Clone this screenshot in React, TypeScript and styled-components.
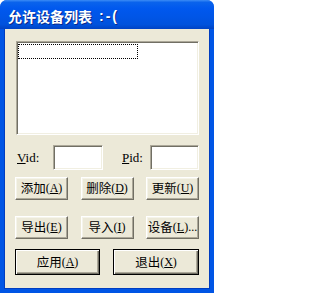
import { FunctionComponent, ReactNode } from 'react'
import styled, { createGlobalStyle } from 'styled-components'

const GlobalStyle = createGlobalStyle`
  html, body {
    margin: 0;
    padding: 0;
    background: #ffffff;
  }
  body {
    width: 214px;
    height: 293px;
    overflow: hidden;
  }
`

const Window = styled.div`
  display: flex;
  flex-direction: column;
  width: 214px;
  height: 293px;
  border-radius: 7px 7px 0 0;
  overflow: hidden;
  background: #0054e3;
`

const TitleBar = styled.div`
  display: flex;
  align-items: center;
  flex-shrink: 0;
  height: 29px;
  padding: 3px 0 0 8px;
  box-sizing: border-box;
  background: linear-gradient(
    #3c8cf5 0%,
    #0a63ec 8%,
    #0058ee 30%,
    #0055e6 60%,
    #0052dc 85%,
    #0043c4 100%
  );
  color: #ffffff;
  font: bold 14px 'Liberation Sans', 'Noto Sans CJK SC', sans-serif;
  text-shadow: 1px 1px 0 #0a2a8a;
  white-space: pre;
`

const Smiley = styled.span`
  margin-left: 7px;
  letter-spacing: 2px;
`

const Client = styled.div`
  flex: 1;
  display: flex;
  flex-direction: column;
  padding: 12px 11px 0 11px;
  border: 4px solid #0055e5;
  border-top: none;
  box-shadow: inset 1px 0 #003dc0, inset -1px 0 #003dc0, inset 0 -1px #003dc0;
  background: #ece9d8;
  font: 12px 'Liberation Serif', 'Noto Sans CJK SC', serif;
  color: #000000;
`

const sunken = `
  box-sizing: border-box;
  background: #ffffff;
  border: 1px solid;
  border-color: #aca899 #ffffff #ffffff #aca899;
  box-shadow: inset 1px 1px #716f64, inset -1px -1px #f1efe2;
`

const ListBox = styled.div`
  ${sunken}
  height: 94px;
  margin-left: 1px;
  padding: 2px 0 0 1px;
`

const FocusItem = styled.div`
  width: 120px;
  height: 15px;
  box-sizing: border-box;
  border: 1px dotted #000000;
`

const FieldRow = styled.div`
  display: grid;
  grid-template-columns: 38px 50px 17px 30px 49px;
  align-items: center;
  height: 25px;
  margin-top: 10px;
`

const Label = styled.span`
  padding-left: 2px;
  font-size: 13px;
`

const Input = styled.div`
  ${sunken}
  height: 25px;
`

const ButtonRow = styled.div<{ cols: string; top: number; h: number }>`
  display: grid;
  grid-template-columns: ${({ cols }) => cols};
  justify-content: space-between;
  height: ${({ h }) => h}px;
  margin-top: ${({ top }) => top}px;
`

const Button = styled.button<{ primary?: boolean }>`
  display: flex;
  align-items: center;
  justify-content: center;
  padding: 0;
  margin: 0;
  background: #ece9d8;
  font: inherit;
  color: #000000;
  white-space: nowrap;
  border: 1px solid;
  border-color: #ffffff #716f64 #716f64 #ffffff;
  box-shadow: inset -1px -1px #aca899, inset 1px 1px #f5f4ea;

  ${({ primary }) =>
    primary &&
    `
    border-color: #000000;
    box-shadow: inset 1px 1px #ffffff, inset -1px -1px #716f64, inset -2px -2px #aca899;
  `}

  u {
    text-decoration: underline;
    text-underline-offset: 1px;
  }
`

const Cjk = styled.span`
  font-family: 'Noto Sans CJK SC', sans-serif;
  font-size: 12.5px;
  line-height: 1;
`

interface BtnProps {
  label: string
  mnemonic: string
  suffix?: string
  primary?: boolean
}

const DlgButton: FunctionComponent<BtnProps> = ({ label, mnemonic, suffix, primary }) => (
  <Button primary={primary}>
    <Cjk>{label}</Cjk>(<u>{mnemonic}</u>){suffix}
  </Button>
)

const Mnemonic: FunctionComponent<{ first: string; rest: string }> = ({ first, rest }) => (
  <Label>
    <u>{first}</u>
    {rest}
  </Label>
)

const App: FunctionComponent = () => {
  const rows: BtnProps[][] = [
    [
      { label: '添加', mnemonic: 'A' },
      { label: '删除', mnemonic: 'D' },
      { label: '更新', mnemonic: 'U' },
    ],
    [
      { label: '导出', mnemonic: 'E' },
      { label: '导入', mnemonic: 'I' },
      { label: '设备', mnemonic: 'L', suffix: '...' },
    ],
  ]

  const renderRow = (row: BtnProps[]): ReactNode =>
    row.map((b) => <DlgButton key={b.label} {...b} />)

  return (
    <>
      <GlobalStyle />
      <Window>
        <TitleBar>
          允许设备列表<Smiley>:-(</Smiley>
        </TitleBar>
        <Client>
          <ListBox>
            <FocusItem />
          </ListBox>
          <FieldRow>
            <Mnemonic first="V" rest="id:" />
            <Input />
            <span />
            <Mnemonic first="P" rest="id:" />
            <Input />
          </FieldRow>
          <ButtonRow cols="53px 53px 53px" top={7} h={23}>
            {renderRow(rows[0])}
          </ButtonRow>
          <ButtonRow cols="53px 53px 53px" top={16} h={23}>
            {renderRow(rows[1])}
          </ButtonRow>
          <ButtonRow cols="85px 86px" top={10} h={26}>
            <DlgButton label="应用" mnemonic="A" primary />
            <DlgButton label="退出" mnemonic="X" primary />
          </ButtonRow>
        </Client>
      </Window>
    </>
  )
}

export default App
